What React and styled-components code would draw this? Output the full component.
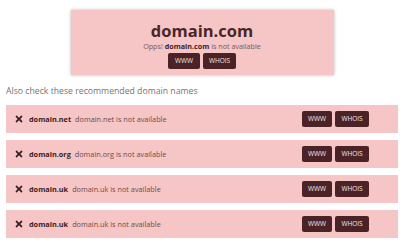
import React from 'react';
import styled, { createGlobalStyle } from 'styled-components';
import { FaTimes } from 'react-icons/fa';

const GlobalStyle = createGlobalStyle`
  body {
    margin: 0;
    background: #fff;
    font-family: 'Open Sans', 'DejaVu Sans', sans-serif;
  }
`;

const Page = styled.div`
  width: 392px;
  padding: 10px 0 0 6px;
`;

const TopBox = styled.div`
  width: 263px;
  margin: 0 auto;
  padding: 11px 0 6px;
  background-color: #f6c5c5;
  box-shadow: 0 0 3px rgba(60, 40, 40, 0.35);
  text-align: center;
`;

const Title = styled.h1`
  margin: 0;
  font-size: 16.5px;
  line-height: 20px;
  font-weight: 700;
  color: #4a2626;
`;

const Sub = styled.p`
  margin: 0;
  font-size: 7.2px;
  line-height: 10px;
  color: #7b5a5a;

  & b {
    color: #3e2222;
  }
`;

const Buttons = styled.div`
  display: flex;
  gap: 3px;
  justify-content: ${({ center }) => (center ? 'center' : 'flex-end')};
  margin-top: ${({ center }) => (center ? '2px' : '0')};
  margin-left: ${({ center }) => (center ? '0' : 'auto')};
`;

const Btn = styled.button`
  width: ${({ w }) => w}px;
  height: 16px;
  padding: 0;
  border: none;
  border-radius: 2px;
  background-color: #4b2326;
  color: #f3e6e6;
  font-family: 'Open Sans', sans-serif;
  font-size: 6.5px;
  line-height: 16px;
`;

const Heading = styled.div`
  margin: 10px 0 8px;
  font-size: 8.7px;
  line-height: 12px;
  color: #7a7272;
`;

const List = styled.ul`
  list-style: none;
  margin: 0;
  padding: 0;
  display: flex;
  flex-direction: column;
  gap: 7px;
`;

const Row = styled.li`
  height: 28px;
  display: flex;
  align-items: center;
  padding: 0 29px 0 8px;
  background-color: #f6c5c5;
  font-size: 7.3px;
  color: #6f4c4c;

  & svg {
    width: 10px;
    height: 10px;
    color: #3a2020;
    margin-right: 5px;
  }
`;

const Name = styled.b`
  color: #3e2222;
  margin-right: 4px;
`;

const rows = ['domain.net', 'domain.org', 'domain.uk', 'domain.uk'];

export default function App() {
  return (
    <Page>
      <GlobalStyle />
      <TopBox>
        <Title>domain.com</Title>
        <Sub>
          Opps! <b>domain.com</b> is not available
        </Sub>
        <Buttons center>
          <Btn w={32}>WWW</Btn>
          <Btn w={33}>WHOIS</Btn>
        </Buttons>
      </TopBox>
      <Heading>Also check these recommended domain names</Heading>
      <List>
        {rows.map((d, i) => (
          <Row key={i}>
            <FaTimes />
            <Name>{d}</Name>
            <span>{d} is not available</span>
            <Buttons>
              <Btn w={30}>WWW</Btn>
              <Btn w={34}>WHOIS</Btn>
            </Buttons>
          </Row>
        ))}
      </List>
    </Page>
  );
}
